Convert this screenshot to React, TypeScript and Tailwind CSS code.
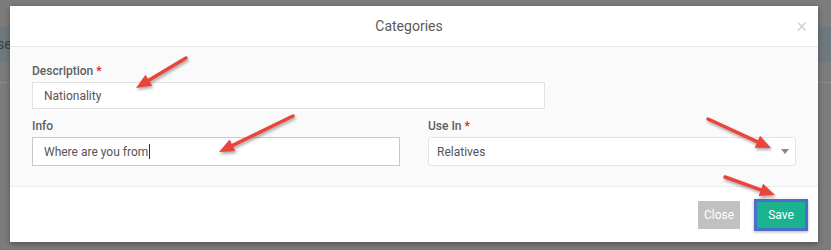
import React from "react";

type Arrow = { x1: number; y1: number; x2: number; y2: number };

const arrows: Arrow[] = [
  { x1: 186, y1: 58, x2: 136, y2: 88 },
  { x1: 293, y1: 116, x2: 219, y2: 152 },
  { x1: 708, y1: 119, x2: 771, y2: 148 },
  { x1: 725, y1: 177, x2: 775, y2: 195 },
];

function ArrowShape({ a }: { a: Arrow }) {
  const dx = a.x2 - a.x1;
  const dy = a.y2 - a.y1;
  const len = Math.sqrt(dx * dx + dy * dy);
  const ux = dx / len;
  const uy = dy / len;
  const headLen = 15;
  const headW = 6.5;
  const bx = a.x2 - ux * headLen;
  const by = a.y2 - uy * headLen;
  const px = -uy;
  const py = ux;
  const p1 = `${a.x2},${a.y2}`;
  const p2 = `${bx + px * headW},${by + py * headW}`;
  const p3 = `${bx - px * headW},${by - py * headW}`;
  return (
    <g filter="url(#arrowShadow)">
      <line
        x1={a.x1}
        y1={a.y1}
        x2={bx + ux * 2}
        y2={by + uy * 2}
        stroke="#e8453c"
        strokeWidth={3.5}
        strokeLinecap="round"
      />
      <polygon points={`${p1} ${p2} ${p3}`} fill="#e8453c" />
    </g>
  );
}

export default function App() {
  return (
    <div
      className="relative w-[831px] h-[250px] overflow-hidden bg-[#7c7c7c]"
      style={{ fontFamily: 'Roboto, "Open Sans", sans-serif' }}
    >
      {/* page content behind the backdrop */}
      <div className="flex flex-col">
        <div className="h-[27px]" />
        <div className="h-[35px] bg-[#6e797f] flex items-center">
          <span className="text-[14px] text-[#3a3f42] -ml-[3px]">se</span>
        </div>
        <div className="h-[20px]" />
        <div className="border-t border-dotted border-[#9a9a9a]" />
      </div>

      {/* modal */}
      <div className="absolute left-[10px] top-[6px] w-[808px] h-[236px] bg-white shadow-[0_2px_6px_rgba(0,0,0,0.35)] flex flex-col">
        <div className="relative h-[41px] flex items-center justify-center border-b border-[#e7e7e7]">
          <span className="text-[14px] text-[#5a5a5a] mr-[10px]">Categories</span>
          <span className="absolute right-[11px] top-[9px] text-[20px] leading-[20px] text-[#c8c8c8] font-light">
            ×
          </span>
        </div>

        <div className="bg-[#fafafa] px-[22px] pt-[15px] h-[140px] border-b border-[#ececec] flex flex-col">
          <label className="text-[12px] leading-[18px] font-medium text-[#5f5f5f] mb-[2px]">
            Description <span className="text-[#e2231a]">*</span>
          </label>
          <div className="w-[513px] h-[27px] border border-[#e2e2e2] bg-white flex items-center px-[11px] text-[12px] text-[#555]">
            Nationality
          </div>

          <div className="mt-[8px] flex gap-[28px]">
            <div className="w-[368px] flex flex-col">
              <label className="text-[12px] leading-[18px] font-medium text-[#5f5f5f] mb-[2px]">Info</label>
              <div className="h-[29px] border border-[#c9c9c9] bg-white flex items-center px-[11px] text-[12px] text-[#555]">
                Where are you from
                <span className="inline-block w-px h-[15px] bg-[#333] ml-[1px]" />
              </div>
            </div>
            <div className="w-[368px] flex flex-col">
              <label className="text-[12px] leading-[18px] font-medium text-[#5f5f5f] mb-[2px]">
                Use In <span className="text-[#e2231a]">*</span>
              </label>
              <div className="h-[29px] border border-[#e4e4e4] rounded-[3px] bg-white flex items-center justify-between pl-[8px] pr-[6px] text-[12px] text-[#555]">
                <span>Relatives</span>
                <svg width="8" height="5" viewBox="0 0 8 5">
                  <polygon points="0,0 8,0 4,5" fill="#888" />
                </svg>
              </div>
            </div>
          </div>
        </div>

        <div className="flex-1 flex items-center justify-end pr-[10px] gap-[14px]">
          <button className="w-[42px] h-[28px] bg-[#c1c1c1] text-white text-[12px] flex items-center justify-center">
            Close
          </button>
          <button className="w-[54px] h-[32px] border-[3px] border-[#4a6ec9] bg-[#1bb38f] text-white text-[12px] flex items-center justify-center shadow-[0_1px_3px_rgba(0,0,0,0.3)]">
            Save
          </button>
        </div>
      </div>

      {/* annotation arrows */}
      <svg
        className="absolute left-0 top-0 pointer-events-none"
        width="831"
        height="250"
        viewBox="0 0 831 250"
      >
        <defs>
          <filter id="arrowShadow" x="-20%" y="-20%" width="140%" height="140%">
            <feDropShadow dx="1" dy="2" stdDeviation="1.5" floodColor="#000" floodOpacity="0.35" />
          </filter>
        </defs>
        {arrows.map((a, i) => (
          <ArrowShape key={i} a={a} />
        ))}
      </svg>
    </div>
  );
}
